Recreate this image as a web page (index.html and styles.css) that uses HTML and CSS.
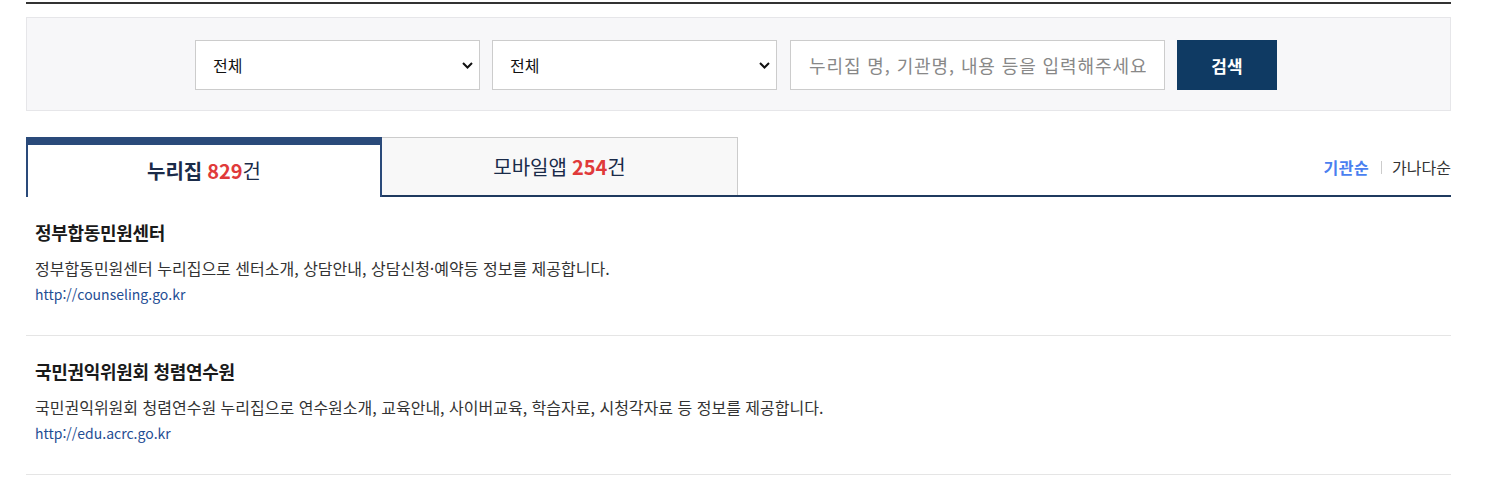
FILE: index.html
```html
<!DOCTYPE html>
<html lang="ko">
<head>
    <meta charset="UTF-8">
    <meta name="viewport" content="width=device-width, initial-scale=1.0">
    <title>누리집 목록</title>
    <link rel="stylesheet" href="styles.css">
</head>
<body>
<div class="wrap">
    <div class="search_box">
        <span class="sel_wrap">
            <select class="sel">
                <option>전체</option>
            </select>
            <svg class="arrow" width="11" height="7" viewBox="0 0 11 7"><path d="M1 1l4.5 4.5L10 1" fill="none" stroke="#111" stroke-width="2"/></svg>
        </span>
        <span class="sel_wrap">
            <select class="sel">
                <option>전체</option>
            </select>
            <svg class="arrow" width="11" height="7" viewBox="0 0 11 7"><path d="M1 1l4.5 4.5L10 1" fill="none" stroke="#111" stroke-width="2"/></svg>
        </span>
        <input type="text" class="keyword" placeholder="누리집 명, 기관명, 내용 등을 입력해주세요">
        <button class="btn_search">검색</button>
    </div>

    <div class="tab_area">
        <ul class="tabs">
            <li class="tab on"><strong>누리집</strong> <em>829</em>건</li>
            <li class="tab">모바일앱 <em>254</em>건</li>
        </ul>
        <div class="sort">
            <a href="#" class="on">기관순</a>
            <span class="bar"></span>
            <a href="#">가나다순</a>
        </div>
    </div>

    <ul class="site_list">
        <li class="item">
            <p class="tit">정부합동민원센터</p>
            <p class="desc">정부합동민원센터 누리집으로 센터소개, 상담안내, 상담신청·예약등 정보를 제공합니다.</p>
            <a href="#" class="url">http://counseling.go.kr</a>
        </li>
        <li class="item">
            <p class="tit">국민권익위원회 청렴연수원</p>
            <p class="desc">국민권익위원회 청렴연수원 누리집으로 연수원소개, 교육안내, 사이버교육, 학습자료, 시청각자료 등 정보를 제공합니다.</p>
            <a href="#" class="url">http://edu.acrc.go.kr</a>
        </li>
    </ul>
</div>
</body>
</html>
```

FILE: styles.css
```css
*{
    box-sizing: border-box;
}
body{
    margin: 0;
    font-family: "Noto Sans CJK KR", "Noto Sans", sans-serif;
    color: #222;
    background: #fff;
}
ul, p{
    margin: 0;
    padding: 0;
    list-style: none;
}
a{
    text-decoration: none;
}
.wrap{
    width: 1425px;
    margin: 2px 0 0 26px;
    border-top: 2px solid #333;
}
.search_box{
    margin-top: 13px;
    display: flex;
    justify-content: center;
    gap: 12px;
    padding: 22px 5px 20px 0;
    background: #f7f7f9;
    border: 1px solid #e6e6e9;
}
.sel_wrap{
    position: relative;
    display: block;
}
.sel{
    display: block;
    width: 285px;
    height: 50px;
    border: 1px solid #ccc;
    background: #fff;
    padding: 0 30px 0 17px;
    font-family: inherit;
    font-size: 16px;
    color: #111;
    border-radius: 0;
    appearance: none;
    -webkit-appearance: none;
}
.arrow{
    position: absolute;
    right: 7px;
    top: 22px;
    pointer-events: none;
}
.keyword{
    width: 375px;
    height: 50px;
    border: 1px solid #ccc;
    padding: 0 18px;
    font-family: inherit;
    font-size: 18px;
    letter-spacing: 0.9px;
    margin-left: 1px;
}
.keyword::placeholder{
    color: #888;
}
.btn_search{
    width: 100px;
    height: 50px;
    border: none;
    background: #0f3a63;
    color: #fff;
    font-family: inherit;
    font-size: 17px;
    font-weight: 700;
}
.tab_area{
    margin-top: 26px;
    display: flex;
    justify-content: space-between;
    align-items: center;
    border-bottom: 2px solid #1f3a5f;
}
.tabs{
    display: flex;
}
.tab{
    width: 356px;
    height: 58px;
    display: flex;
    justify-content: center;
    align-items: center;
    font-size: 20px;
    color: #1a2b49;
    background: #f8f8f8;
    border-top: 1px solid #ccc;
    border-right: 1px solid #ccc;
}
.tab.on{
    height: 60px;
    margin-bottom: -2px;
    background: #fff;
    border: 2px solid #2a4a7a;
    border-top-width: 8px;
    border-bottom: none;
    padding-bottom: 2px;
}
.tab strong{
    font-weight: 700;
    margin-right: 5px;
}
.tab em{
    font-style: normal;
    font-weight: 700;
    color: #e03a3a;
    margin-left: 5px;
}
.tab.on em{
    margin-left: 0;
}
.sort{
    display: flex;
    align-items: center;
    font-size: 16px;
    padding-top: 2px;
}
.sort a{
    color: #333;
}
.sort a.on{
    color: #4a7ff0;
    font-weight: 700;
    letter-spacing: 0.5px;
}
.sort .bar{
    width: 1px;
    height: 13px;
    background: #ccc;
    margin: 0 10px 0 12px;
}
.item{
    padding: 23px 9px 30px;
    border-bottom: 1px solid #e5e5e5;
}
.tit{
    font-size: 18px;
    font-weight: 700;
    letter-spacing: -0.3px;
    line-height: 24px;
    color: #1a1a1a;
}
.desc{
    margin-top: 13px;
    font-size: 16px;
    line-height: 22px;
    color: #333;
}
.url{
    display: inline-block;
    margin-top: 5px;
    font-size: 14px;
    line-height: 20px;
    color: #1f4e94;
}
```
